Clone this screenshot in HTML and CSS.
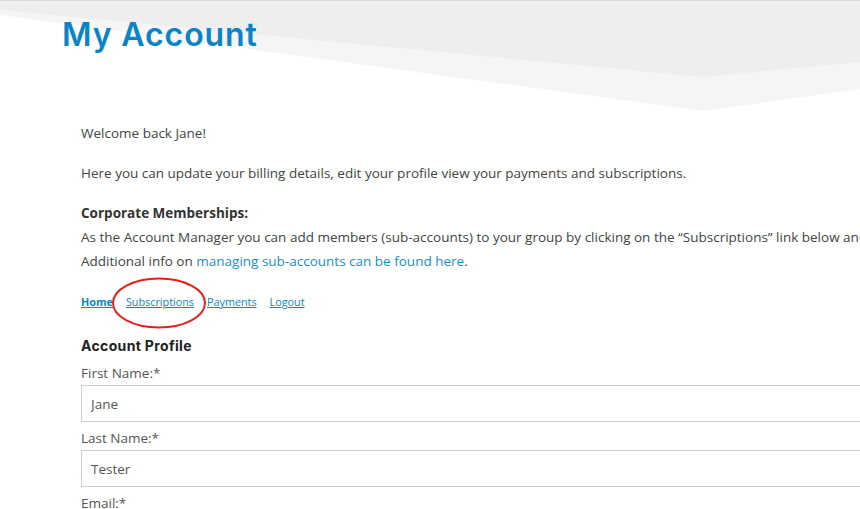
FILE: index.html
```html
<!DOCTYPE html>
<html lang="en">
<head>
    <meta charset="UTF-8">
    <meta name="viewport" content="width=device-width, initial-scale=1.0">
    <title>My Account</title>
    <link rel="stylesheet" href="styles.css">
</head>
<body>

<header class="page-header">
    <svg class="header-bg" viewBox="0 0 860 110" preserveAspectRatio="none" aria-hidden="true">
        <polygon points="0,0 860,0 860,88 703,110 0,14" fill="#f5f5f5"/>
        <polygon points="0,0 860,0 860,61 703,76 0,9" fill="#eeeeee"/>
    </svg>
    <h1 class="page-title">My Account</h1>
</header>

<main class="account">
    <p>Welcome back Jane!</p>
    <p>Here you can update your billing details, edit your profile view your payments and subscriptions.</p>
    <p>
        <strong>Corporate Memberships:</strong><br>
        As the Account Manager you can add members (sub-accounts) to your group by clicking on the &ldquo;Subscriptions&rdquo; link below and then clicking on manage.<br>
        Additional info on <a href="#" class="text-link">managing sub-accounts can be found here</a>.
    </p>

    <nav class="account-nav">
        <a href="#" class="active">Home</a>
        <a href="#" class="marked">Subscriptions
            <svg class="ring" viewBox="0 0 96 54" aria-hidden="true">
                <ellipse cx="48" cy="27" rx="46" ry="24.5" fill="none" stroke="#e3201b" stroke-width="2"/>
            </svg>
        </a>
        <a href="#">Payments</a>
        <a href="#">Logout</a>
    </nav>

    <h3 class="section-title">Account Profile</h3>

    <form class="profile-form">
        <label for="first-name">First Name:*</label>
        <input type="text" id="first-name" value="Jane">

        <label for="last-name">Last Name:*</label>
        <input type="text" id="last-name" value="Tester">

        <label for="email">Email:*</label>
        <input type="text" id="email" value="jane@example.com">
    </form>
</main>

</body>
</html>
```

FILE: styles.css
```css
html, body {
    margin: 0;
    padding: 0;
    overflow: hidden;
}

body {
    font-family: "Open Sans", "Liberation Sans", sans-serif;
    font-size: 13.5px;
    color: #444;
    background-color: #fff;
}

.page-header {
    position: relative;
    height: 110px;
    border-top: 1px solid #d9d9d9;
}

.header-bg {
    position: absolute;
    top: 0;
    left: 0;
    width: 100%;
    height: 110px;
}

.page-title {
    position: relative;
    margin: 0;
    padding: 13px 0 0 62px;
    font-family: Inter, "Liberation Sans", sans-serif;
    font-size: 32px;
    font-weight: 600;
    letter-spacing: 0.9px;
    line-height: 42px;
    color: #0a84c6;
}

.account {
    width: 1000px;
    padding: 10px 0 0 81px;
}

.account p {
    margin: 0 0 16px;
    line-height: 24px;
}

.account strong {
    color: #333;
}

.text-link {
    color: #1a8fca;
    text-decoration: none;
}

.account-nav {
    display: flex;
    gap: 13px;
    font-size: 10.8px;
    line-height: 26px;
}

.account-nav a {
    color: #0a85c6;
    text-decoration: underline;
}

.account-nav a.active {
    font-weight: bold;
}

.account-nav .marked {
    position: relative;
}

.ring {
    position: absolute;
    left: -15px;
    top: -13px;
    width: 96px;
    height: 54px;
}

.section-title {
    margin: 21px 0 7px;
    font-family: Inter, "Liberation Sans", sans-serif;
    font-size: 14px;
    font-weight: 700;
    letter-spacing: 0.35px;
    line-height: 20px;
    color: #222;
}

.profile-form {
    display: flex;
    flex-direction: column;
    align-items: flex-start;
}

.profile-form label {
    line-height: 20px;
    color: #555;
    margin-bottom: 2px;
}

.profile-form input {
    box-sizing: border-box;
    width: 900px;
    height: 37px;
    margin: 0 0 6px;
    padding: 0 9px;
    border: 1px solid #cccccc;
    font-family: "Open Sans", "Liberation Sans", sans-serif;
    font-size: 13.5px;
    color: #555;
    background: #fff;
}
```
